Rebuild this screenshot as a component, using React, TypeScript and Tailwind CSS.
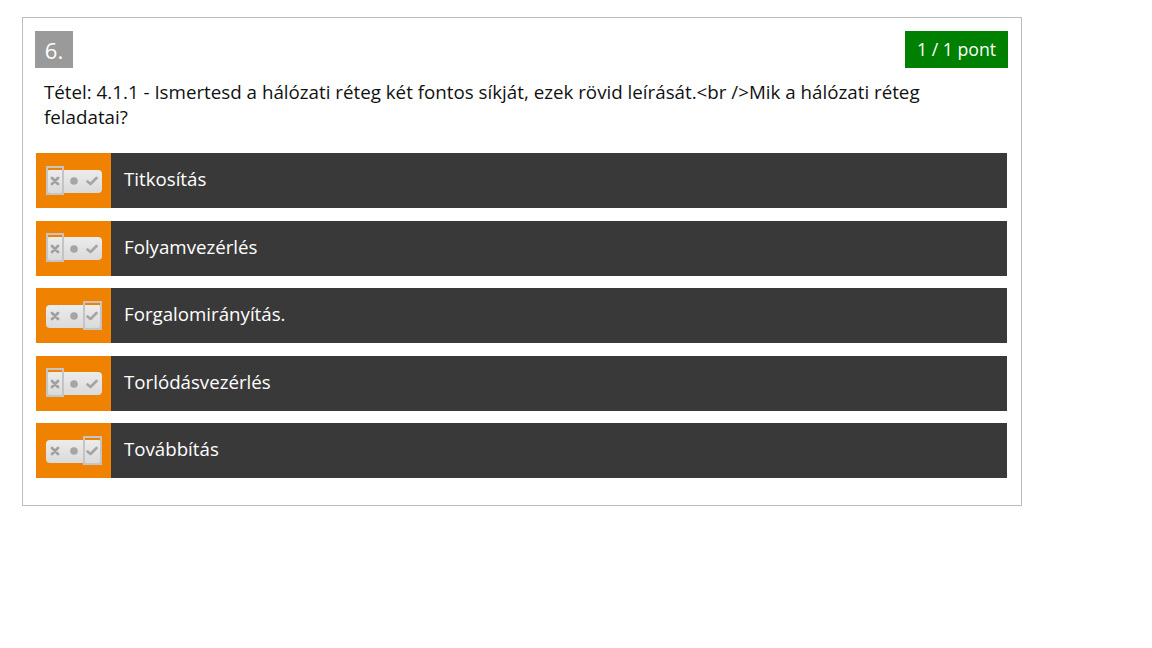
import React from "react";

type Choice = "no" | "none" | "yes";

const answers: { text: string; choice: Choice }[] = [
  { text: "Titkosítás", choice: "no" },
  { text: "Folyamvezérlés", choice: "no" },
  { text: "Forgalomirányítás.", choice: "yes" },
  { text: "Torlódásvezérlés", choice: "no" },
  { text: "Továbbítás", choice: "yes" },
];

const XIcon = () => (
  <svg width="10" height="10" viewBox="0 0 10 10">
    <path d="M2 2 L8 8 M8 2 L2 8" stroke="#a0a0a0" strokeWidth="2.8" strokeLinecap="round" />
  </svg>
);

const DotIcon = () => (
  <svg width="10" height="10" viewBox="0 0 10 10">
    <circle cx="5" cy="5" r="3.8" fill="#a5a5a5" />
  </svg>
);

const CheckIcon = () => (
  <svg width="12" height="10" viewBox="0 0 12 10">
    <path d="M1.5 5.5 L4.5 8 L10.5 2" stroke="#a5a5a5" strokeWidth="2.6" fill="none" strokeLinecap="round" strokeLinejoin="round" />
  </svg>
);

const Toggle: React.FC<{ choice: Choice }> = ({ choice }) => {
  const slots: { key: Choice; icon: React.ReactNode }[] = [
    { key: "no", icon: <XIcon /> },
    { key: "none", icon: <DotIcon /> },
    { key: "yes", icon: <CheckIcon /> },
  ];
  return (
    <div className="flex w-[56px] h-[23px] rounded-[4px] bg-gradient-to-b from-[#ececec] to-[#dadada]">
      {slots.map((s) => (
        <div key={s.key} className="relative flex-1 flex items-center justify-center">
          {s.icon}
          {choice === s.key && (
            <div className="absolute left-0 right-0 -top-[4px] -bottom-[2px] border-2 border-[#c4c4c4]" />
          )}
        </div>
      ))}
    </div>
  );
};

export default function App() {
  return (
    <div
      className="pl-[22px] pt-[17px] bg-white min-h-screen"
      style={{ fontFamily: '"Open Sans", "Noto Sans", sans-serif' }}
    >
      <div className="w-[1000px] border border-[#bdbdbd] pl-[13px] pr-[14px] pt-[13px] pb-[27px]">
        {/* fejléc */}
        <div className="flex justify-between items-start">
          <div className="-ml-px w-[38px] h-[37px] bg-[#9a9a9a] text-white text-[22px] flex items-center justify-center leading-none">
            6.
          </div>
          <div className="-mr-px w-[103px] h-[37px] bg-[#008000] text-white text-[17.7px] flex items-center justify-center">
            1 / 1 pont
          </div>
        </div>

        {/* kérdés */}
        <div className="pl-[8px] pr-[40px] mt-[11px] text-[18.75px] leading-[25px] text-[#111]">
          Tétel: 4.1.1 - Ismertesd a hálózati réteg két fontos síkját, ezek rövid leírását.&lt;br /&gt;Mik a hálózati réteg feladatai?
        </div>

        {/* válaszok */}
        <div className="mt-[24px] flex flex-col gap-[12.5px]">
          {answers.map((a) => (
            <div key={a.text} className="flex h-[55px] bg-[#393939]">
              <div className="w-[75px] bg-[#ef8200] flex items-center justify-center pt-[1px]">
                <Toggle choice={a.choice} />
              </div>
              <div className="flex items-center pl-[13px] pb-[2px] text-white text-[18.7px]">{a.text}</div>
            </div>
          ))}
        </div>
      </div>
    </div>
  );
}
